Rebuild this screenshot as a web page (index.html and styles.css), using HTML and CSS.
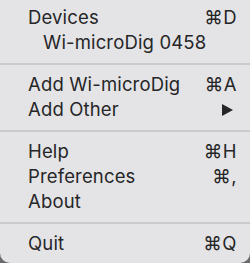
FILE: index.html
```html
<!doctype html>
<html lang="en">
<head>
  <meta charset="utf-8">
  <title>Menu</title>
  <meta name="viewport" content="width=device-width, initial-scale=1">
<link rel="stylesheet" href="styles.css">
</head>
<body>

  <!-- Status bar menu -->
  <div class="menu" role="menu">
    <div class="item"><span class="label">Devices</span><span class="key">⌘D</span></div>
    <div class="item sub"><span class="label">Wi-microDig 0458</span></div>

    <div class="sep"></div>

    <div class="item"><span class="label">Add Wi-microDig</span><span class="key">⌘A</span></div>
    <div class="item"><span class="label">Add Other</span>
      <svg class="arrow" width="11" height="12" viewBox="0 0 11 12" aria-hidden="true"><path d="M0 0 L11 6 L0 12 Z" fill="currentColor"/></svg>
    </div>

    <div class="sep"></div>

    <div class="item"><span class="label">Help</span><span class="key">⌘H</span></div>
    <div class="item"><span class="label">Preferences</span><span class="key">⌘,</span></div>
    <div class="item"><span class="label">About</span></div>

    <div class="sep"></div>

    <div class="item"><span class="label">Quit</span><span class="key">⌘Q</span></div>
  </div>

</body>
</html>
```

FILE: styles.css
```css
/* ===== Menu tokens ===== */
:root{
  --bg:#e4e4e6; --text:#262628; --sep:#cacacc; --outside:#6a6a6c;
  --row-h:25px; --pad-l:28px; --pad-r:13px;
}
*{ box-sizing:border-box }
html,body{ height:100% }
body{ margin:0; background:var(--outside); font:18.5px/1 Inter,"Liberation Sans","DejaVu Sans",sans-serif; color:var(--text); }

.menu{ width:250px; height:263px; background:var(--bg); border-radius:0 0 10px 10px; padding-top:5px; overflow:hidden; }

.item{ height:var(--row-h); line-height:var(--row-h); display:flex; align-items:center; justify-content:space-between; padding:0 var(--pad-r) 0 var(--pad-l); white-space:nowrap; }
.item.sub{ padding-left:43px }
.label{ letter-spacing:.15px }
.key{ font-family:Inter,"DejaVu Sans",sans-serif; letter-spacing:.5px; }

.arrow{ display:block; margin-right:4px; color:var(--text); }

.sep{ height:17px; display:flex; align-items:center; }
.sep::before{ content:""; display:block; width:100%; height:2px; background:var(--sep); }
```
